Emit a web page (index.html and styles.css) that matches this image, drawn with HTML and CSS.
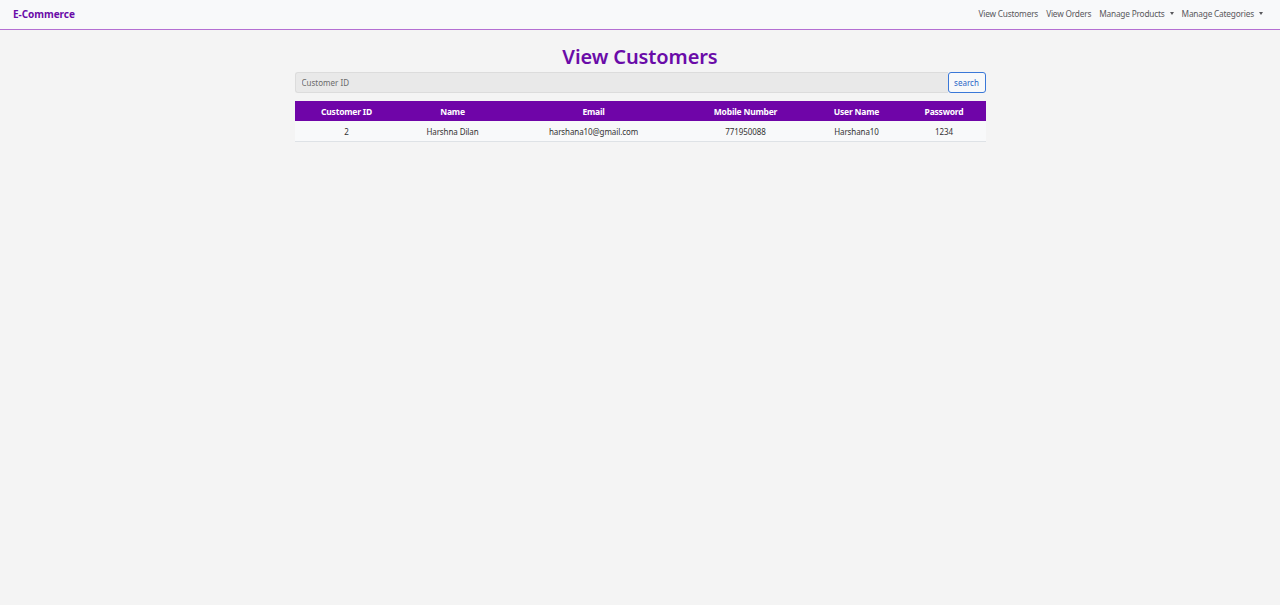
FILE: index.html
```html
<!DOCTYPE html>
<html lang="en">
<head>
<meta charset="utf-8">
<title>View Customers</title>
<link rel="stylesheet" href="styles.css">
</head>
<body>
<nav class="navbar">
  <a class="brand" href="#">E-Commerce</a>
  <ul class="nav-links">
    <li><a href="#">View Customers</a></li>
    <li><a href="#">View Orders</a></li>
    <li><a href="#" class="dropdown">Manage Products</a></li>
    <li><a href="#" class="dropdown">Manage Categories</a></li>
  </ul>
</nav>
<main class="container">
  <h1 class="title">View Customers</h1>
  <form class="search-form">
    <input class="search-input" type="text" placeholder="Customer ID">
    <button class="search-btn" type="button">search</button>
  </form>
  <table class="customers">
    <colgroup>
      <col class="c1"><col class="c2"><col class="c3"><col class="c4"><col class="c5"><col class="c6">
    </colgroup>
    <thead>
      <tr>
        <th>Customer ID</th>
        <th>Name</th>
        <th>Email</th>
        <th>Mobile Number</th>
        <th>User Name</th>
        <th>Password</th>
      </tr>
    </thead>
    <tbody>
      <tr>
        <td>2</td>
        <td>Harshna Dilan</td>
        <td>harshana10@gmail.com</td>
        <td>771950088</td>
        <td>Harshana10</td>
        <td>1234</td>
      </tr>
    </tbody>
  </table>
</main>
</body>
</html>
```

FILE: styles.css
```css
* { box-sizing: border-box; }
html, body {
  margin: 0;
  padding: 0;
  background: #f4f4f4;
  font-family: "Noto Sans", "Open Sans", sans-serif;
  color: #212529;
}
.navbar {
  height: 30px;
  background: #f8f9fa;
  border-bottom: 1px solid #b46fd2;
  display: flex;
  align-items: center;
  justify-content: space-between;
  padding: 0 13px 2px 13px;
}
.brand {
  color: #6a0ba8;
  font-weight: 700;
  font-size: 10px;
  line-height: 14px;
  text-decoration: none;
  letter-spacing: -0.05px;
}
.nav-links {
  list-style: none;
  margin: 0;
  padding: 0 4px 0 0;
  display: flex;
  gap: 8px;
  font-size: 8.3px;
  line-height: 12px;
}
.nav-links a {
  color: #58585c;
  text-decoration: none;
  letter-spacing: -0.2px;
}
.dropdown::after {
  content: "";
  display: inline-block;
  margin-left: 5px;
  vertical-align: 2px;
  border-top: 3px solid #58585c;
  border-left: 2.5px solid transparent;
  border-right: 2.5px solid transparent;
}
.container {
  width: 691px;
  margin: 0 auto;
  display: flex;
  flex-direction: column;
}
.title {
  margin: 13px 0 0 0;
  text-align: center;
  color: #6a0ba8;
  font-size: 20px;
  font-weight: 600;
  line-height: 27px;
  letter-spacing: -0.1px;
}
.search-form {
  display: flex;
  margin-top: 2px;
  height: 21px;
}
.search-input {
  flex: 1;
  height: 21px;
  border: 1px solid #dcdcdc;
  border-right: none;
  border-radius: 3px 0 0 3px;
  background: #e9e9e9;
  padding: 0 6px;
  font-family: inherit;
  font-size: 8px;
  color: #555;
  outline: none;
}
.search-input::placeholder { color: #6b6b6b; }
.search-btn {
  width: 38px;
  height: 21px;
  border: 1px solid #3a78d8;
  border-radius: 3px;
  background: #f8f9fa;
  color: #2a64c6;
  font-family: inherit;
  font-size: 8px;
  padding: 0;
}
.customers {
  margin-top: 8px;
  width: 691px;
  border-collapse: collapse;
  table-layout: fixed;
}
.c1 { width: 104px; }
.c2 { width: 108px; }
.c3 { width: 174px; }
.c4 { width: 130px; }
.c5 { width: 92px; }
.c6 { width: 83px; }
.customers th {
  background: #6f05a8;
  color: #ffffff;
  font-size: 8.5px;
  font-weight: 700;
  height: 20px;
  padding: 0;
  text-align: center;
  letter-spacing: -0.2px;
}
.customers td {
  background: #f8f9fa;
  color: #333;
  font-size: 8px;
  height: 20px;
  padding: 2px 0 0 0;
  text-align: center;
  border-bottom: 1px solid #dee2e6;
  letter-spacing: -0.1px;
}
```
